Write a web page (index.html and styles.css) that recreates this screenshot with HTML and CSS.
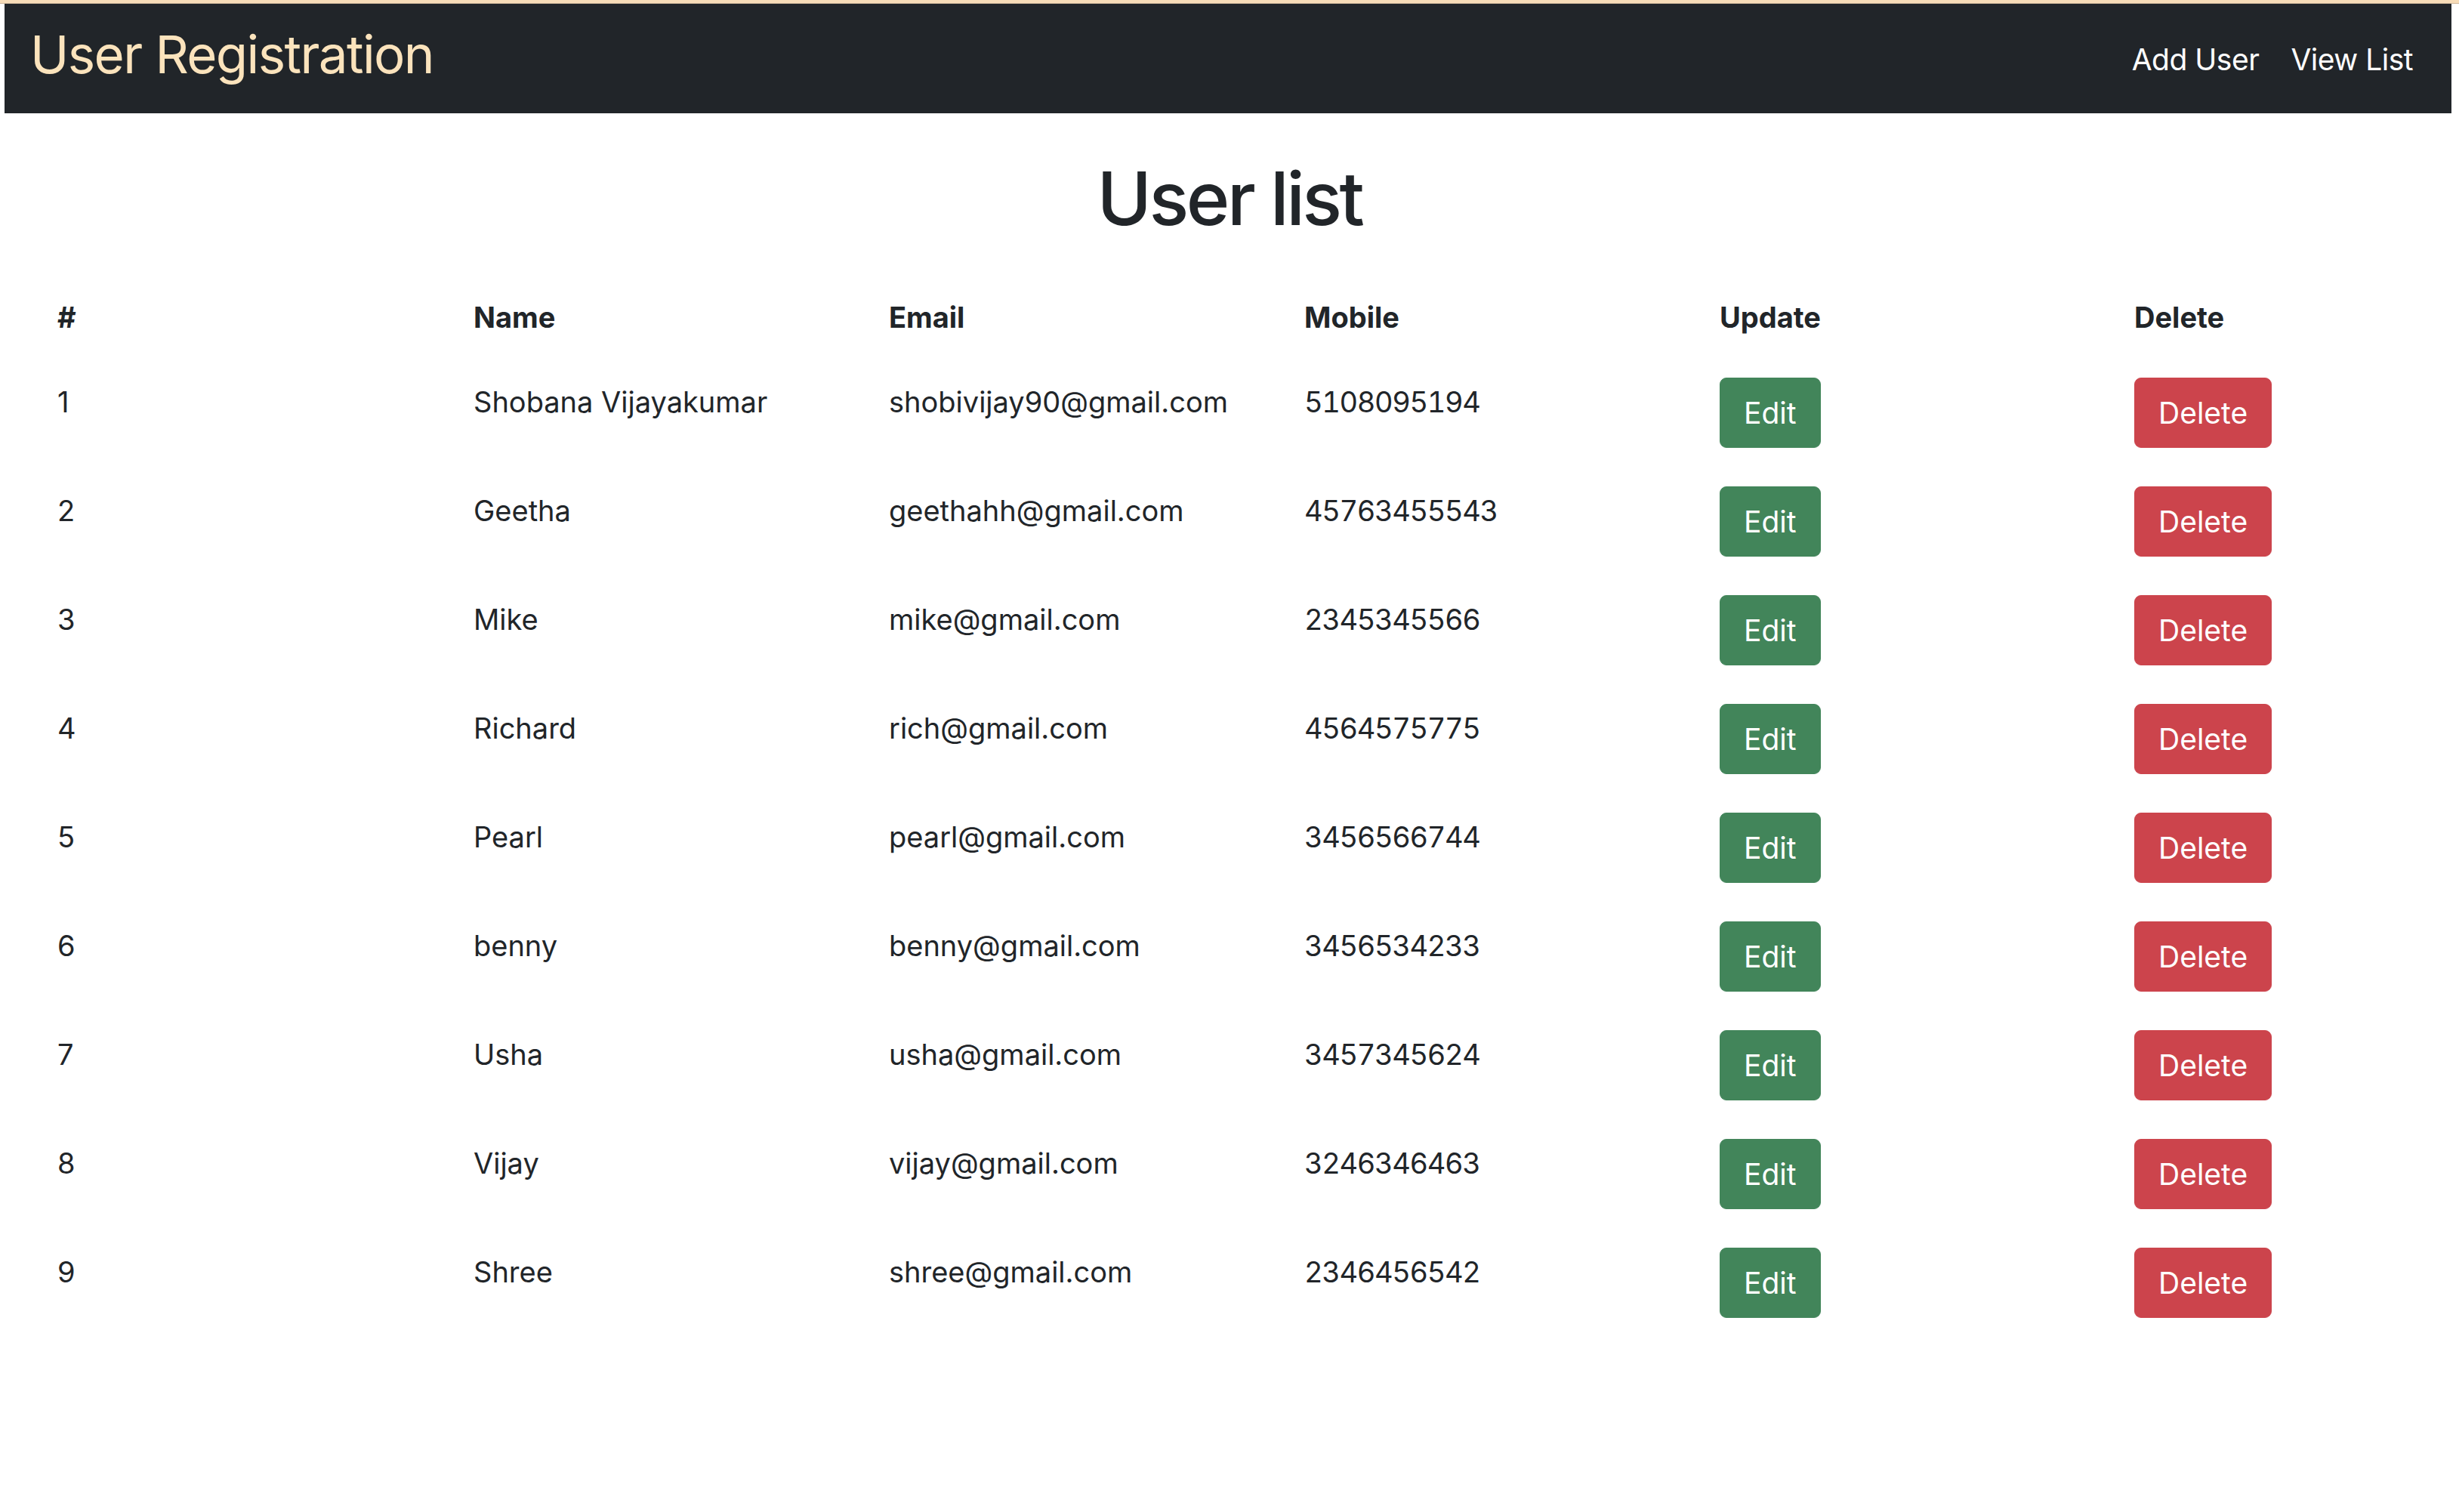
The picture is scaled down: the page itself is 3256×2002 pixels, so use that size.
FILE: index.html
```html
<!DOCTYPE html>
<html lang="en">
<head>
<meta charset="utf-8">
<title>User Registration</title>
<link rel="stylesheet" href="styles.css">
</head>
<body>
<div class="topband"></div>
<nav class="navbar">
  <a class="brand" href="#">User Registration</a>
  <div class="navlinks">
    <a class="navlink" href="#">Add User</a>
    <a class="navlink" href="#">View List</a>
  </div>
</nav>
<main class="content">
  <h1 class="title">User list</h1>
  <div class="table">
    <div class="row head">
      <div class="cell">#</div>
      <div class="cell">Name</div>
      <div class="cell">Email</div>
      <div class="cell">Mobile</div>
      <div class="cell">Update</div>
      <div class="cell">Delete</div>
    </div>
    <div class="row">
      <div class="cell">1</div><div class="cell">Shobana Vijayakumar</div><div class="cell">shobivijay90@gmail.com</div><div class="cell num">5108095194</div>
      <div class="cell"><button class="btn edit">Edit</button></div><div class="cell"><button class="btn del">Delete</button></div>
    </div>
    <div class="row">
      <div class="cell">2</div><div class="cell">Geetha</div><div class="cell">geethahh@gmail.com</div><div class="cell num">45763455543</div>
      <div class="cell"><button class="btn edit">Edit</button></div><div class="cell"><button class="btn del">Delete</button></div>
    </div>
    <div class="row">
      <div class="cell">3</div><div class="cell">Mike</div><div class="cell">mike@gmail.com</div><div class="cell num">2345345566</div>
      <div class="cell"><button class="btn edit">Edit</button></div><div class="cell"><button class="btn del">Delete</button></div>
    </div>
    <div class="row">
      <div class="cell">4</div><div class="cell">Richard</div><div class="cell">rich@gmail.com</div><div class="cell num">4564575775</div>
      <div class="cell"><button class="btn edit">Edit</button></div><div class="cell"><button class="btn del">Delete</button></div>
    </div>
    <div class="row">
      <div class="cell">5</div><div class="cell">Pearl</div><div class="cell">pearl@gmail.com</div><div class="cell num">3456566744</div>
      <div class="cell"><button class="btn edit">Edit</button></div><div class="cell"><button class="btn del">Delete</button></div>
    </div>
    <div class="row">
      <div class="cell">6</div><div class="cell">benny</div><div class="cell">benny@gmail.com</div><div class="cell num">3456534233</div>
      <div class="cell"><button class="btn edit">Edit</button></div><div class="cell"><button class="btn del">Delete</button></div>
    </div>
    <div class="row">
      <div class="cell">7</div><div class="cell">Usha</div><div class="cell">usha@gmail.com</div><div class="cell num">3457345624</div>
      <div class="cell"><button class="btn edit">Edit</button></div><div class="cell"><button class="btn del">Delete</button></div>
    </div>
    <div class="row">
      <div class="cell">8</div><div class="cell">Vijay</div><div class="cell">vijay@gmail.com</div><div class="cell num">3246346463</div>
      <div class="cell"><button class="btn edit">Edit</button></div><div class="cell"><button class="btn del">Delete</button></div>
    </div>
    <div class="row">
      <div class="cell">9</div><div class="cell">Shree</div><div class="cell">shree@gmail.com</div><div class="cell num">2346456542</div>
      <div class="cell"><button class="btn edit">Edit</button></div><div class="cell"><button class="btn del">Delete</button></div>
    </div>
  </div>
</main>
</body>
</html>
```
FILE: styles.css
```css
* { box-sizing: border-box; }
html, body { margin: 0; padding: 0; background: #fff; }
body {
  font-family: Inter, "Noto Sans", sans-serif;
  color: #212529;
}
.topband {
  height: 5px;
  background: #f7dcb8;
  border-bottom: 1px solid #cdb79b;
}
.navbar {
  margin: 0 10px 0 6px;
  height: 145px;
  background: #212529;
  display: flex;
  align-items: center;
  justify-content: space-between;
  padding: 0 51px 0 34px;
}
.brand {
  color: #fbe3bc;
  text-decoration: none;
  font-size: 69px;
  font-weight: 400;
  line-height: 1;
  letter-spacing: -1.6px;
  margin-top: -10px;
}
.navlinks {
  display: flex;
  gap: 42px;
  margin-top: 4px;
}
.navlink {
  color: #fff;
  text-decoration: none;
  font-size: 39px;
  line-height: 1.5;
  letter-spacing: -0.5px;
}
.content {
  padding: 0;
}
.title {
  margin: 54px 0 0;
  text-align: center;
  font-size: 98px;
  font-weight: 500;
  line-height: 118px;
  letter-spacing: -3.5px;
}
.table {
  margin-top: 66px;
  padding-left: 56px;
}
.row {
  display: grid;
  grid-template-columns: 551px 550px 550px 550px 549px 1fr;
  align-items: start;
  height: 144px;
  padding-top: 24px;
  font-size: 38px;
  line-height: 60px;
}
.row.head {
  height: 88px;
  padding-top: 0;
  font-weight: 700;
}
.cell {
  padding-left: 20px;
  padding-top: 2px;
}
.num {
  font-variant-numeric: tabular-nums;
  letter-spacing: -1.4px;
}
.btn {
  font-family: inherit;
  font-size: 39px;
  line-height: 1;
  height: 93px;
  padding: 0 31px;
  border: 1px solid transparent;
  border-radius: 9px;
  color: #fff;
  display: inline-flex;
  align-items: center;
  margin-top: -2px;
}
.btn.edit { background: #42855a; border-color: #42855a; }
.btn.del { background: #cc444c; border-color: #cc444c; }
```
